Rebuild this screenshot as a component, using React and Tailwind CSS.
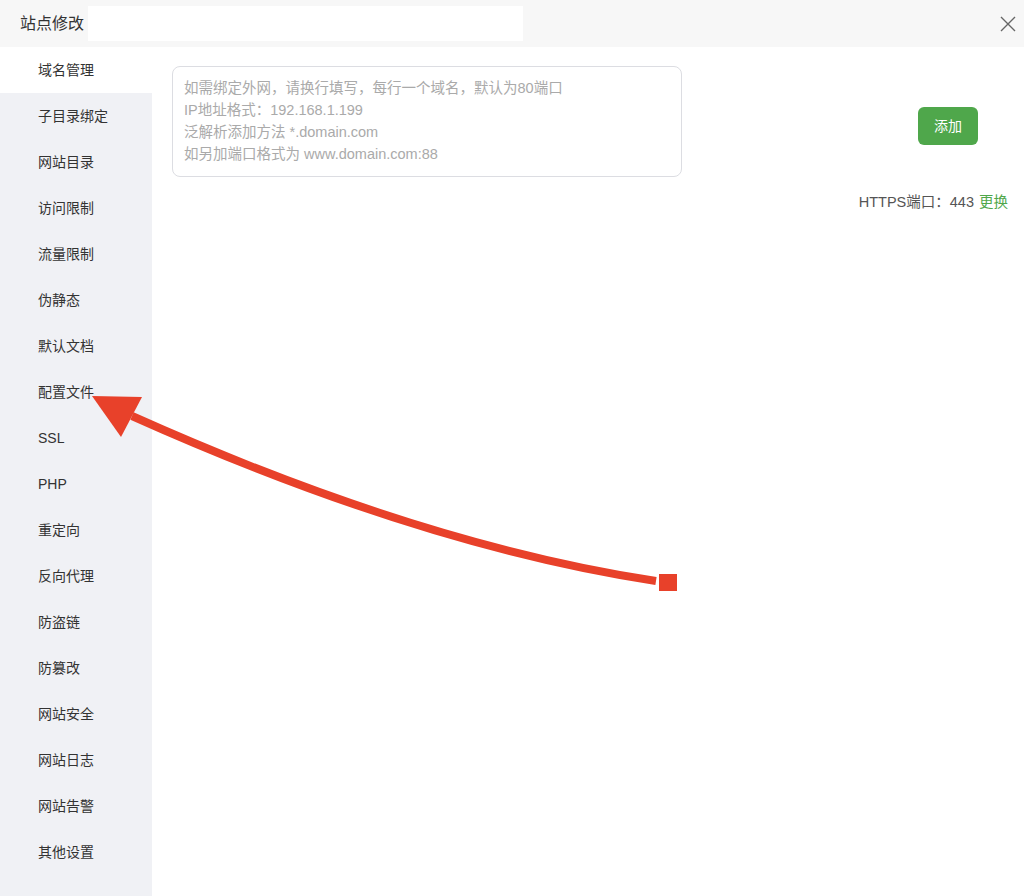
import React from "react";

const items = [
  "域名管理", "子目录绑定", "网站目录", "访问限制", "流量限制", "伪静态", "默认文档", "配置文件",
  "SSL", "PHP", "重定向", "反向代理", "防盗链", "防篡改", "网站安全", "网站日志", "网站告警", "其他设置",
];

export default function App() {
  return (
    <div
      className="relative w-[1024px] h-[896px] flex flex-col bg-white overflow-hidden text-[#333]"
      style={{ fontFamily: '"Liberation Sans", "Noto Sans CJK SC", sans-serif' }}
    >
      <div className="h-[47px] shrink-0 bg-[#f7f7f7] flex items-center">
        <div className="pl-[20px] w-[88px] text-[16px] text-[#333]">站点修改</div>
        <div className="w-[435px] h-[35px] bg-white"></div>
        <div className="flex-1"></div>
        <button className="mr-[8px] w-[16px] h-[16px] flex items-center justify-center">
          <svg width="16" height="16" viewBox="0 0 16 16" fill="none" stroke="#666" strokeWidth="1.4">
            <path d="M1 1 L15 15 M15 1 L1 15" />
          </svg>
        </button>
      </div>
      <div className="flex-1 flex min-h-0">
        <div className="w-[152px] shrink-0 bg-[#f0f1f5] flex flex-col">
          {items.map((t, i) => (
            <div
              key={t}
              className={`h-[46px] shrink-0 flex items-center pl-[38px] text-[14px] text-[#333] ${i === 0 ? "bg-white" : ""}`}
            >
              {t}
            </div>
          ))}
        </div>
        <div className="flex-1 pt-[19px] pl-[20px] pr-[16px] flex flex-col">
          <div className="flex">
            <div className="w-[510px] h-[111px] border border-[#dcdde2] rounded-[8px] px-[11px] pt-[10px] text-[14.5px] leading-[22px] text-[#aaa]">
              <div>如需绑定外网，请换行填写，每行一个域名，默认为80端口</div>
              <div>IP地址格式：192.168.1.199</div>
              <div>泛解析添加方法 *.domain.com</div>
              <div>如另加端口格式为 www.domain.com:88</div>
            </div>
            <div className="flex-1 flex justify-end pr-[30px] pt-[41px]">
              <button className="w-[60px] h-[38px] rounded-[6px] bg-[#4fa74b] text-white text-[14px]">添加</button>
            </div>
          </div>
          <div className="mt-[15px] flex justify-end text-[14.5px] leading-[20px] text-[#555]">
            <span>HTTPS端口：443</span>
            <span className="ml-[5px] text-[#4fa74b]">更换</span>
          </div>
        </div>
      </div>
      <svg className="absolute left-0 top-0 pointer-events-none" width="1024" height="896" viewBox="0 0 1024 896">
        <path d="M656 581 Q420 545 132 416" stroke="#e8412a" strokeWidth="8" fill="none" />
        <polygon points="92,396 142,397 121,437" fill="#e8412a" />
        <rect x="659" y="574" width="18" height="17" fill="#e8412a" />
      </svg>
    </div>
  );
}
